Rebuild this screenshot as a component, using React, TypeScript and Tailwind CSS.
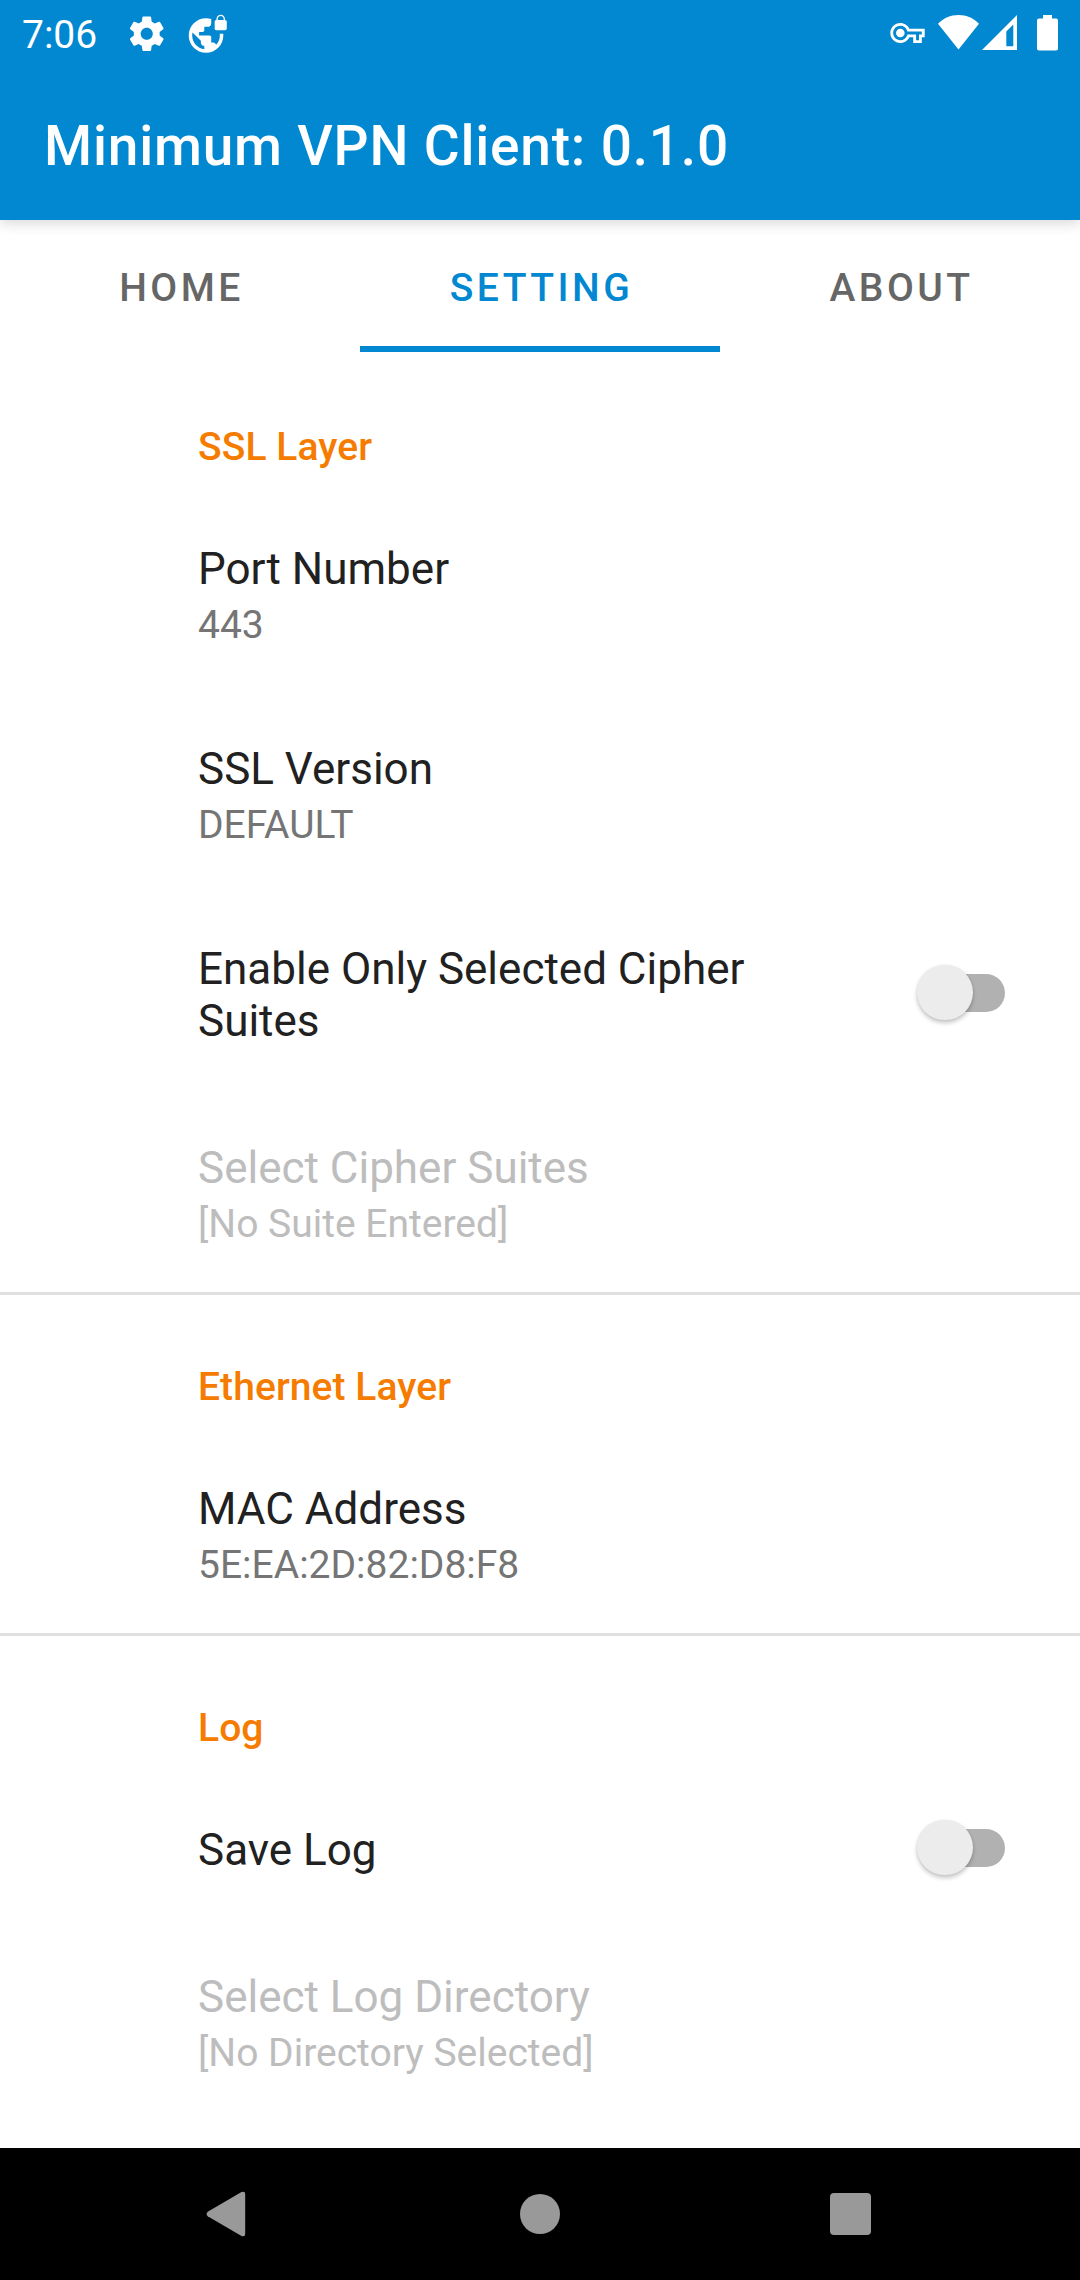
import type { ReactNode } from "react";

function StatusBar() {
  return (
    <div className="flex h-[66px] text-white">
      <div className="w-[126px] pl-[22px] pt-[2px] text-[39px] leading-[66px]">7:06</div>
      <svg className="mt-[13px] size-[41.5px]" viewBox="0 0 24 24" fill="currentColor">
        <path d="M19.43 12.98c.04-.32.07-.64.07-.98s-.03-.66-.07-.98l2.11-1.65c.19-.15.24-.42.12-.64l-2-3.46c-.12-.22-.39-.3-.61-.22l-2.49 1c-.52-.4-1.08-.73-1.69-.98l-.38-2.65C14.46 2.18 14.25 2 14 2h-4c-.25 0-.46.18-.49.42l-.38 2.65c-.61.25-1.17.59-1.69.98l-2.49-1c-.23-.09-.49 0-.61.22l-2 3.46c-.13.22-.07.49.12.64l2.11 1.65c-.04.32-.07.65-.07.98s.03.66.07.98l-2.11 1.65c-.19.15-.24.42-.12.64l2 3.46c.12.22.39.3.61.22l2.49-1c.52.4 1.08.73 1.69.98l.38 2.65c.03.24.24.42.49.42h4c.25 0 .46-.18.49-.42l.38-2.65c.61-.25 1.17-.59 1.69-.98l2.49 1c.23.09.49 0 .61-.22l2-3.46c.12-.22.07-.49-.12-.64l-2.11-1.65zM12 15.5c-1.93 0-3.5-1.57-3.5-3.5s1.57-3.5 3.5-3.5 3.5 1.57 3.5 3.5-1.57 3.5-3.5 3.5z" />
      </svg>
      <svg className="ml-[19px] mt-[13px] size-[41.5px]" viewBox="0 0 24 24" fill="currentColor">
        <path d="M22 4v-.5C22 2.12 20.88 1 19.5 1S17 2.12 17 3.5V4c-.55 0-1 .45-1 1v4c0 .55.45 1 1 1h5c.55 0 1-.45 1-1V5c0-.55-.45-1-1-1zm-.8 0h-3.4v-.5c0-.94.76-1.7 1.7-1.7s1.7.76 1.7 1.7V4zm-2.28 8c.04.33.08.66.08 1 0 2.08-.8 3.97-2.1 5.39-.26-.81-1-1.39-1.9-1.39h-1v-3c0-.55-.45-1-1-1H7v-2h2c.55 0 1-.45 1-1V8h2c1.1 0 2-.9 2-2V3.46c-.95-.3-1.95-.46-3-.46C5.48 3 1 7.48 1 13s4.48 10 10 10 10-4.48 10-10c0-.34-.02-.67-.05-1h-2.03zM10 20.93c-3.95-.49-7-3.85-7-7.93 0-.62.08-1.21.21-1.79L8 16v1c0 1.1.9 2 2 2v1.93z" />
      </svg>
      <svg className="ml-auto mr-[22px] h-[66px] w-[168px]" viewBox="890 0 168 66" fill="currentColor">
        <path transform="translate(890.3 15.8) scale(1.433)" d="M22 19h-6v-4h-2.68c-1.14 2.42-3.6 4-6.32 4-3.86 0-7-3.14-7-7s3.14-7 7-7c2.72 0 5.17 1.58 6.32 4H24v6h-2v4zm-4-2h2v-4h2v-2H11.94l-.23-.67C11.01 8.34 9.11 7 7 7c-2.76 0-5 2.24-5 5s2.24 5 5 5c2.11 0 4.01-1.34 4.71-3.33l.23-.67H18v4zM7 15c-1.65 0-3-1.35-3-3s1.35-3 3-3 3 1.35 3 3-1.35 3-3 3z" />
        <path d="M938 23.8C943.5 18.2 950.5 15 958.5 15s15 3.2 20.5 8.8L958.5 49.5z" />
        <path fillRule="evenodd" d="M1017 15v35h-35zM1013.3 24.5l-7 7V46.2h7z" />
        <path d="M1043 15h9v3.6h4a2 2 0 0 1 2 2V48.5a2 2 0 0 1-2 2h-17a2 2 0 0 1-2-2V20.6a2 2 0 0 1 2-2h4z" />
      </svg>
    </div>
  );
}

function Switch() {
  return (
    <div className="relative flex h-[56px] w-[88px] items-center justify-end">
      <div className="h-[38px] w-[74px] rounded-full bg-[#b1b1b1]" />
      <div className="absolute left-0 top-0 h-[55.5px] w-[55.5px] rounded-full bg-[#ececec] shadow-[0_3px_4px_rgba(0,0,0,0.22),0_0_3px_rgba(0,0,0,0.06)]" />
    </div>
  );
}

function Section({ title, children }: { title: string; children: ReactNode }) {
  return (
    <section className="border-b-[3px] border-[#e0e0e0] pl-[198px] pt-[66px] last:border-b-0">
      <h2 className="mb-[20px] text-[39px] leading-[52px] font-medium tracking-[0.08px] text-[#f57c00]">{title}</h2>
      {children}
    </section>
  );
}

function Item({ title, summary, disabled }: { title: string; summary: string; disabled?: boolean }) {
  return (
    <div className={`h-[200px] pt-[50px] ${disabled ? "text-[#bdbdbd]" : "text-[#212121]"}`}>
      <div className="text-[44px] leading-[52px]">{title}</div>
      <div className={`mt-[4px] text-[39px] leading-[52px] ${disabled ? "" : "text-[#757575]"}`}>{summary}</div>
    </div>
  );
}

function SwitchItem({ title, height }: { title: string; height: string }) {
  return (
    <div className={`flex items-center justify-between pr-[75px] ${height}`}>
      <div className="h-full w-[590px] pt-[50px] text-[44px] leading-[52px] text-[#212121]">{title}</div>
      <Switch />
    </div>
  );
}

export default function App() {
  return (
    <div className="flex h-[2280px] w-[1080px] flex-col bg-white font-['Roboto',sans-serif]">
      <header className="h-[220px] bg-[#0288d1] text-white shadow-[0_4px_12px_rgba(0,0,0,0.14)]">
        <StatusBar />
        <h1 className="pl-[44px] pt-[48px] text-[55px] leading-[64px] font-medium tracking-[0.8px]">Minimum VPN Client: 0.1.0</h1>
      </header>
      <nav className="grid h-[132px] grid-cols-3 text-center text-[39px] leading-[136px] font-medium tracking-[3.5px] text-[#666]">
        <div className="h-[132px] pl-[3px]">HOME</div>
        <div className="h-[132px] border-b-[6px] border-[#0288d1] pl-[3px] text-[#0288d1]">SETTING</div>
        <div className="h-[132px] pl-[3px]">ABOUT</div>
      </nav>
      <main className="h-[1796px] pt-[3px]">
        <Section title="SSL Layer">
          <Item title="Port Number" summary="443" />
          <Item title="SSL Version" summary="DEFAULT" />
          <SwitchItem title="Enable Only Selected Cipher Suites" height="h-[199px]" />
          <Item title="Select Cipher Suites" summary="[No Suite Entered]" disabled />
        </Section>
        <Section title="Ethernet Layer">
          <Item title="MAC Address" summary="5E:EA:2D:82:D8:F8" />
        </Section>
        <Section title="Log">
          <SwitchItem title="Save Log" height="h-[147px]" />
          <Item title="Select Log Directory" summary="[No Directory Selected]" disabled />
        </Section>
      </main>
      <footer className="grid h-[132px] grid-cols-3 items-center bg-black px-[72px] text-[#999]">
        <svg className="ml-[132px] h-[46px] w-[42px]" viewBox="0 0 42 46" fill="currentColor">
          <path d="M3.7 20.7L37.5 1.1Q41.2 -.3 41.2 3V43Q41.2 46.3 37.5 44.9L3.7 25.3Q1.5 23 3.7 20.7z" />
        </svg>
        <div className="size-[40.5px] justify-self-center rounded-full bg-[#999]" />
        <div className="mr-[137px] size-[41.5px] justify-self-end rounded-[4px] bg-[#999]" />
      </footer>
    </div>
  );
}
